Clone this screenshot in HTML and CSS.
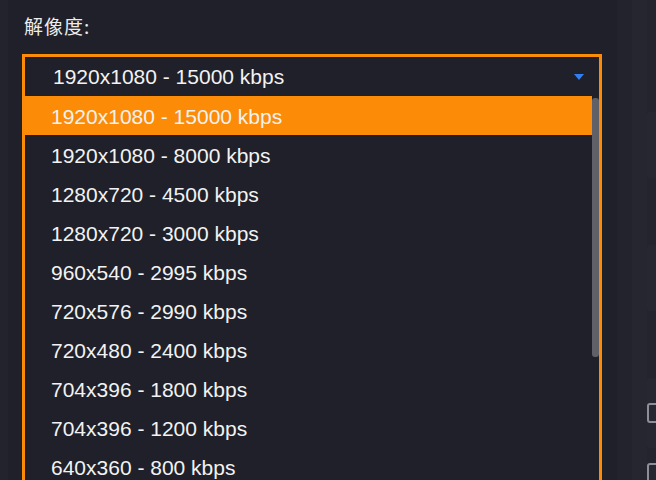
FILE: index.html
```html
<!DOCTYPE html>
<html>
<head>
<meta charset="utf-8">
<link rel="stylesheet" href="styles.css">
</head>
<body>
<div class="page">
  <div class="edge"></div>
  <div class="main">
    <div class="label">解像度:</div>
    <div class="combo">
      <div class="combo-head">
        <span class="combo-text">1920x1080 - 15000 kbps</span>
        <svg class="arrow" width="10" height="6" viewBox="0 0 10 6"><path d="M0 0 H10 L5 6 Z" fill="#2f80f5"/></svg>
      </div>
      <div class="popup">
        <ul class="list">
          <li class="item active">1920x1080 - 15000 kbps</li>
          <li class="item">1920x1080 - 8000 kbps</li>
          <li class="item">1280x720 - 4500 kbps</li>
          <li class="item">1280x720 - 3000 kbps</li>
          <li class="item">960x540 - 2995 kbps</li>
          <li class="item">720x576 - 2990 kbps</li>
          <li class="item">720x480 - 2400 kbps</li>
          <li class="item">704x396 - 1800 kbps</li>
          <li class="item">704x396 - 1200 kbps</li>
          <li class="item">640x360 - 800 kbps</li>
        </ul>
        <div class="scroll"><div class="thumb"></div></div>
      </div>
    </div>
  </div>
  <div class="side">
    <div class="stripe s1"></div>
    <div class="stripe s2"></div>
    <div class="col">
      <div class="card"></div>
      <div class="card"></div>
      <div class="card"><span class="check"></span></div>
      <div class="card last"><span class="check"></span></div>
    </div>
  </div>
</div>
</body>
</html>
```

FILE: styles.css
```css
html, body {
  margin: 0;
  padding: 0;
  background: #1f2029;
  height: 100%;
  overflow: hidden;
}
.page {
  display: flex;
  width: 656px;
  height: 480px;
  overflow: hidden;
  font-family: "Liberation Sans", Arial, "Noto Sans CJK SC", sans-serif;
  color: #f2f2f2;
}
.edge {
  width: 8px;
  flex: none;
  background: #22232c;
}
.main {
  width: 609px;
  flex: none;
  padding-left: 14px;
  box-sizing: border-box;
  overflow: hidden;
}
.label {
  font-family: "Noto Sans CJK SC", sans-serif;
  font-size: 19px;
  line-height: 22px;
  margin: 15px 0 0 2px;
  color: #ececec;
  letter-spacing: 1px;
}
.combo {
  margin-top: 17px;
  width: 580px;
  border: 3px solid #fc8b07;
  border-bottom: none;
  box-sizing: border-box;
}
.combo-head {
  height: 39px;
  display: flex;
  align-items: center;
  padding: 0 15px 0 28px;
  background: #1f2029;
}
.combo-text {
  flex: 1;
  font-size: 21px;
}
.arrow {
  display: block;
  margin-top: 1px;
}
.popup {
  display: flex;
  background: #1f2029;
}
.list {
  list-style: none;
  margin: 0;
  padding: 0;
  flex: 1;
}
.item {
  height: 37px;
  line-height: 37px;
  padding: 2px 0 0 26px;
  font-size: 21px;
}
.item.active {
  background: #fc8b07;
}
.scroll {
  width: 7px;
  flex: none;
  padding-top: 2px;
}
.thumb {
  height: 259px;
  background: #5f6068;
  border-radius: 3px;
}
.side {
  flex: 1;
  display: flex;
  background: #23242d;
  overflow: hidden;
}
.stripe {
  width: 15px;
  flex: none;
}
.s1 { background: #22232c; }
.s2 { background: #25262f; }
.col {
  flex: 1;
  padding: 112px 0 0 0;
  display: flex;
  flex-direction: column;
  gap: 67px;
}
.card {
  height: 66px;
  flex: none;
  background: #262730;
  border-radius: 3px 0 0 3px;
  display: flex;
  align-items: center;
}
.card:nth-child(3) { height: 70px; }
.card.last {
  margin-top: -52px;
  align-items: flex-start;
  padding-top: 0;
}
.check {
  width: 14px;
  height: 16px;
  border: 2px solid #8e8f96;
  border-radius: 3px;
}
```
